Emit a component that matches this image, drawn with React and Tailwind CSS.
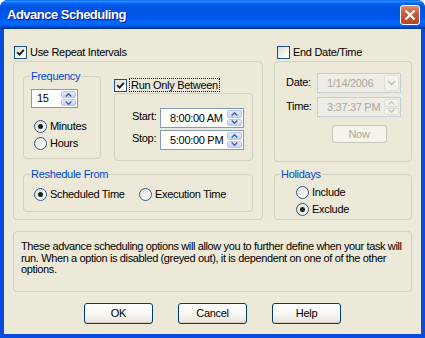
import React from "react";

function Check({ checked }) {
  return (
    <span className="w-[13px] h-[13px] shrink-0 border border-[#1C5180] bg-[linear-gradient(135deg,#DCDCD7_0%,#F4F4F0_60%,#FFFFFF_100%)] flex items-center justify-center">
      {checked && (
        <svg width="9" height="9" viewBox="0 0 9 9">
          <path d="M1.2 4.2 L3.5 6.6 L7.8 1.8" stroke="#1e1e1e" strokeWidth="1.9" fill="none" />
        </svg>
      )}
    </span>
  );
}

function Radio({ checked }) {
  return (
    <span className="w-[13px] h-[13px] shrink-0 rounded-full border border-[#2F5C8E] bg-[linear-gradient(135deg,#DCDCD7_0%,#F4F4F0_60%,#FFFFFF_100%)] flex items-center justify-center">
      {checked && <span className="w-[5px] h-[5px] rounded-full bg-[#1e1e1e]" />}
    </span>
  );
}

function Arrow({ dir, color }) {
  return (
    <svg width="7" height="4" viewBox="0 0 7 4">
      <path
        d={dir === "up" ? "M0.7 3.5 L3.5 0.8 L6.3 3.5" : "M0.7 0.5 L3.5 3.2 L6.3 0.5"}
        stroke={color}
        strokeWidth="1.4"
        fill="none"
      />
    </svg>
  );
}

function Spin({ disabled }) {
  const box = disabled
    ? "border-[#E0DED4] bg-[#F3F2EC]"
    : "border-[#B5C7F2] bg-[linear-gradient(180deg,#E2EAFE_0%,#C3D3FA_100%)]";
  const c = disabled ? "#C6C3B4" : "#4D6185";
  return (
    <div className="flex flex-col w-[15px] shrink-0 gap-[1px]">
      <span className={`flex-1 flex items-center justify-center rounded-[2px] border ${box}`}>
        <Arrow dir="up" color={c} />
      </span>
      <span className={`flex-1 flex items-center justify-center rounded-[2px] border ${box}`}>
        <Arrow dir="down" color={c} />
      </span>
    </div>
  );
}

function DropBtn() {
  return (
    <span className="w-[15px] shrink-0 flex items-center justify-center rounded-[2px] border border-[#E0DED4] bg-[#F3F2EC]">
      <svg width="9" height="6" viewBox="0 0 9 6">
        <path d="M1 1 L4.5 4.5 L8 1" stroke="#C6C3B4" strokeWidth="1.6" fill="none" />
      </svg>
    </span>
  );
}

function Field({ value, disabled, drop, h = "h-[20px]", pl = "pl-[9px]" }) {
  return (
    <div
      className={`${h} border flex ${
        disabled ? "border-[#C6CDD6] bg-[#EDECE5] text-[#ACA899]" : "border-[#7F9DB9] bg-white text-black"
      }`}
    >
      <span className={`flex-1 flex items-center whitespace-nowrap ${pl}`}>{value}</span>
      <div className="p-[1px] flex">{drop ? <DropBtn /> : <Spin disabled={disabled} />}</div>
    </div>
  );
}

function Btn({ children, disabled, w = "w-[69px]", h = "h-[21px]" }) {
  return (
    <div
      className={`${w} ${h} rounded-[3px] border flex items-center justify-center ${
        disabled
          ? "border-[#C9C7BA] bg-[#F5F4EA] text-[#ACA899]"
          : "border-[#003C74] bg-[linear-gradient(180deg,#FFFFFF_0%,#F7F6F2_55%,#E6E3D8_100%)] text-black shadow-[inset_0_-1px_0_#D6D0C5]"
      }`}
    >
      {children}
    </div>
  );
}

export default function App() {
  return (
    <div className="w-[425px] h-[338px] flex flex-col rounded-t-[8px] overflow-hidden bg-[#0A4BDF] font-['Liberation_Sans',Arial,sans-serif] text-[11px] tracking-[-0.3px] leading-[13px] text-black">
      {/* Title bar */}
      <div className="h-[29px] shrink-0 flex items-center justify-between pl-[7px] pr-[5px] bg-[linear-gradient(180deg,#0058EE_0%,#3593FF_4%,#288EFF_6%,#127DFF_8%,#036FFC_10%,#0262EE_14%,#0057E5_20%,#0054E3_24%,#0055EB_56%,#005BF5_66%,#026AFE_76%,#0062EF_86%,#0052D6_92%,#0040AB_96%,#003092_100%)]">
        <span className="text-white font-bold text-[13px] tracking-[-0.5px] [text-shadow:1px_1px_#0A1883]">
          Advance Scheduling
        </span>
        <div className="w-[20px] h-[20px] rounded-[3px] border border-white bg-[linear-gradient(180deg,#D98C71_0%,#C65A3A_45%,#B4472A_100%)] flex items-center justify-center">
          <svg width="12" height="12" viewBox="0 0 12 12">
            <path d="M1.5 1.5 L10.5 10.5 M10.5 1.5 L1.5 10.5" stroke="#FFFFFF" strokeWidth="2.2" />
          </svg>
        </div>
      </div>

      {/* Client area */}
      <div className="flex-1 mx-[4px] mb-[4px] bg-[#ECE9D8] flex flex-col pt-[17px] px-[9px] pb-[10px]">
        <div className="flex items-start gap-[11px]">
          {/* Left column */}
          <div className="w-[250px] flex flex-col">
            <div className="h-[13px] flex items-center gap-[3px] pl-[1px]">
              <Check checked />
              <span>Use Repeat Intervals</span>
            </div>
            <div className="mt-[2px] h-[159px] border border-[#D0D0BF] rounded-[4px] pt-[8px] pl-[9px] pr-[8px] flex flex-col">
              <div className="flex items-start gap-[13px]">
                {/* Frequency */}
                <fieldset className="w-[78px] h-[89px] border border-[#D0D0BF] rounded-[4px]">
                  <legend className="ml-[6px] px-[1px] text-[#0046D5] leading-[13px]">Frequency</legend>
                  <div className="mt-[6px] ml-[7px] w-[47px]">
                    <Field value="15" h="h-[19px]" pl="pl-[5px]" />
                  </div>
                  <div className="mt-[10px] ml-[10px] flex flex-col">
                    <div className="h-[17px] flex items-center gap-[3px]">
                      <Radio checked />
                      <span>Minutes</span>
                    </div>
                    <div className="h-[17px] flex items-center gap-[3px]">
                      <Radio />
                      <span>Hours</span>
                    </div>
                  </div>
                </fieldset>
                {/* Run only between */}
                <div className="w-[139px] mt-[8px] flex flex-col">
                  <div className="h-[14px] flex items-center gap-[2px]">
                    <Check checked />
                    <span className="h-[14px] flex items-center px-[1px] border border-dotted border-black">
                      Run Only Between
                    </span>
                  </div>
                  <div className="mt-[1px] h-[68px] border border-[#D0D0BF] rounded-[4px] pt-[14px] pl-[17px] pr-[8px]">
                    <div className="grid grid-cols-[28px_84px] gap-y-[2px]">
                      <span className="pt-[2px]">Start:</span>
                      <Field value="8:00:00 AM" />
                      <span className="pt-[2px]">Stop:</span>
                      <Field value="5:00:00 PM" />
                    </div>
                  </div>
                </div>
              </div>
              {/* Reshedule */}
              <fieldset className="mt-[7px] w-[230px] h-[44px] border border-[#D0D0BF] rounded-[4px]">
                <legend className="ml-[6px] px-[1px] text-[#0046D5] leading-[13px]">Reshedule From</legend>
                <div className="mt-[5px] ml-[10px] h-[17px] flex items-center">
                  <div className="w-[105px] flex items-center gap-[3px]">
                    <Radio checked />
                    <span>Scheduled Time</span>
                  </div>
                  <div className="flex items-center gap-[3px]">
                    <Radio />
                    <span>Execution Time</span>
                  </div>
                </div>
              </fieldset>
            </div>
          </div>

          {/* Right column */}
          <div className="w-[138px] flex flex-col">
            <div className="h-[13px] flex items-center gap-[3px] pl-[3px]">
              <Check />
              <span>End Date/Time</span>
            </div>
            <div className="mt-[2px] h-[101px] border border-[#D0D0BF] rounded-[4px] pt-[11px] pl-[11px]">
              <div className="grid grid-cols-[31px_84px] gap-y-[4px]">
                <span className="pt-[3px]">Date:</span>
                <Field value="1/14/2006" disabled drop />
                <span className="pt-[3px]">Time:</span>
                <Field value="3:37:37 PM" disabled />
                <span />
                <div className="mt-[4px] flex justify-center">
                  <Btn disabled w="w-[55px]" h="h-[18px]">
                    Now
                  </Btn>
                </div>
              </div>
            </div>
            <fieldset className="mt-[6px] h-[52px] border border-[#D0D0BF] rounded-[4px]">
              <legend className="ml-[5px] px-[1px] text-[#0046D5] leading-[13px]">Holidays</legend>
              <div className="mt-[3px] ml-[21px] flex flex-col">
                <div className="h-[17px] flex items-center gap-[3px]">
                  <Radio />
                  <span>Include</span>
                </div>
                <div className="h-[17px] flex items-center gap-[3px]">
                  <Radio checked />
                  <span>Exclude</span>
                </div>
              </div>
            </fieldset>
          </div>
        </div>

        {/* Description */}
        <div className="mt-[11px] h-[61px] border border-[#D0D0BF] rounded-[4px] pt-[9px] px-[7px] leading-[11.5px] tracking-[-0.37px] whitespace-nowrap">
          These advance scheduling options will allow you to further define when your task will
          <br />
          run. When a option is disabled (greyed out), it is dependent on one of of the other
          <br />
          options.
        </div>

        {/* Buttons */}
        <div className="mt-[11px] flex justify-center gap-[25px]">
          <Btn>OK</Btn>
          <Btn>Cancel</Btn>
          <Btn>Help</Btn>
        </div>
      </div>
    </div>
  );
}
